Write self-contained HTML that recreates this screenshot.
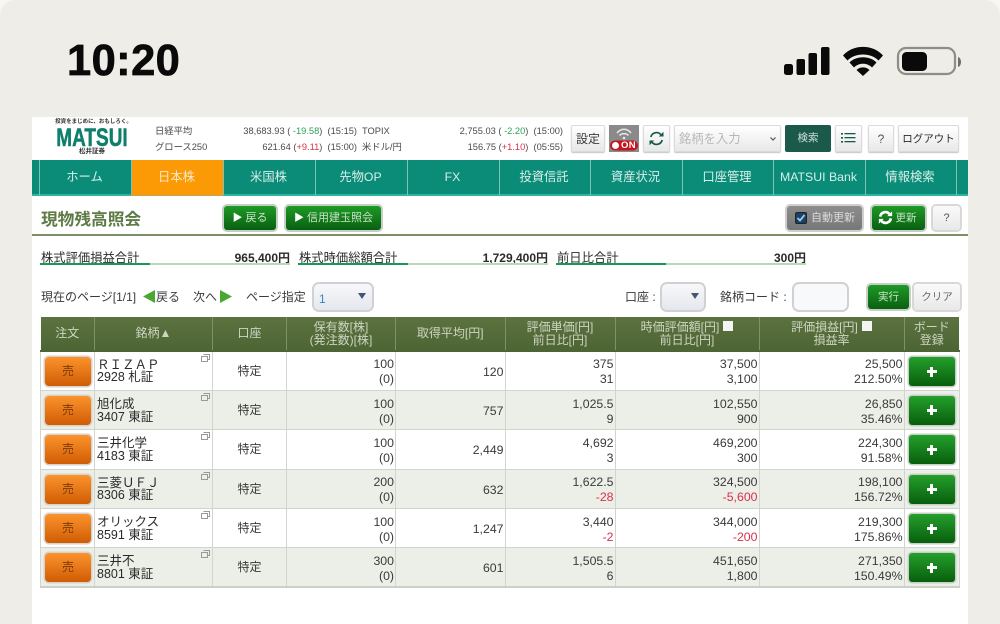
<!DOCTYPE html>
<html lang="ja"><head><meta charset="utf-8"><title>現物残高照会</title>
<style>
*{box-sizing:border-box}
html{margin:0;padding:0;width:1000px;height:624px;overflow:hidden;background:#f7f6f2}
body{margin:0;padding:0;width:1000px;height:624px;overflow:hidden;position:relative;background:#f7f6f2;font-family:"Liberation Sans","Noto Sans CJK JP",sans-serif;color:#3a3a3a;font-size:12px}
#w{position:absolute;left:0;top:0;width:1000px;height:624px;overflow:hidden;filter:blur(.25px)}
.bg{position:absolute;left:0;top:0;width:1000px;height:624px;background:#eeede7;border-radius:16px 16px 0 0}
.a{position:absolute;white-space:nowrap}
.page{position:absolute;left:32px;top:117px;width:936px;height:507px;background:#fff}
.time{left:67px;top:36px;font-size:43.500px;font-weight:bold;color:#0a0a0a;line-height:50px;letter-spacing:.4px;-webkit-text-stroke:.7px #0a0a0a}
.mk{font-size:9.300px;line-height:12px;color:#4a4a4a}
.r{text-align:right}
.g{color:#2aa05a}.red{color:#d8304a}
.btn{position:absolute;background:linear-gradient(#fff,#e8e8e8);border:1px solid #dadada;box-shadow:0 1px 1px #c4c4c4;border-radius:2px;text-align:center;color:#3a3a3a;white-space:nowrap}
.nav{position:absolute;left:32px;top:160px;width:936px;height:36px;background:#0a8c78;border-bottom:2px solid #2db59d}
.nav div{position:absolute;top:0;height:35px;width:92px;line-height:35px;text-align:center;color:#d8eeea;font-size:12.300px;border-left:1px solid #7cc4b6;white-space:nowrap;padding-right:2px}
.gb{position:absolute;border-radius:3px;background:linear-gradient(#1d9a26,#0a5f10);color:#c8e2ca;text-align:center;box-shadow:0 0 0 2px #c6cfc4;white-space:nowrap}
.sum{font-size:12.300px;color:#2a2a2a;line-height:14px}
.val{font-size:12px;font-weight:bold;color:#2a2a2a;line-height:14px;text-align:right;width:100px}
.bar{position:absolute;height:2px;background:#b9d8b8}
.bar i{position:absolute;left:0;top:0;height:2px;background:#169a55}
.sel{position:absolute;background:linear-gradient(#f7f8fa,#e4e7ec);border-radius:5px;box-shadow:0 0 0 2px #cfd1d3}
.arr{position:absolute;width:0;height:0;border-left:4px solid transparent;border-right:4px solid transparent;border-top:6px solid #44557a}
.lb{font-size:12px;line-height:16px;color:#3a3a3a}
table{position:absolute;left:40px;top:317px;width:919.500px;border-collapse:collapse;table-layout:fixed}
th{height:34px;background:linear-gradient(#5c7340,#4d6534);color:#cdd5c2;font-weight:normal;font-size:12px;line-height:12.500px;border-left:1px solid #7f9168;padding:0;text-align:center;border-bottom:2px solid #4d6534}
th:first-child{border-left:0}
td{height:39.400px;border:1px solid #d2d5ce;padding:3px 1px 0 0;font-size:12.300px;line-height:15px;color:#3a3a3a;text-align:right;position:relative;overflow:visible}
tr:nth-child(even) td{background:#eceee8}
tr:last-child td{border-bottom:2px solid #ccd0c8}
td.c{text-align:center;font-size:12px;padding:1px 0 0}
td.n{text-align:left;padding:1px 0 0 2px;line-height:12.500px;font-size:12.500px;color:#2a2a2a}
td.o{padding:0}
.sell{position:absolute;left:4px;top:5px;width:46px;height:29px;border-radius:4px;background:linear-gradient(#fb932c,#d05c04);box-shadow:0 0 0 1.500px #d6d2ca;color:#7c3a05;text-align:center;line-height:29px;font-size:12px}
.plus{position:absolute;left:4px;top:5px;width:46px;height:29px;border-radius:3px;background:linear-gradient(#259f2c,#075f0c);box-shadow:0 0 0 1.500px #c6cfc4}
.plus:before{content:"";position:absolute;left:18px;top:13px;width:10px;height:3px;background:#fff}
.plus:after{content:"";position:absolute;left:21.500px;top:9.500px;width:3px;height:10px;background:#fff}
.win{position:absolute;right:2px;top:2px;width:9px;height:8px}
.chk{display:inline-block;width:10px;height:10px;background:#f4f4f4;vertical-align:0;margin-left:4px}
</style></head><body>
<div id="w">
<div class="bg"></div>
<div class="a time">10:20</div>
<svg class="a" style="left:784px;top:46px" width="180" height="32" viewBox="0 0 180 32">
<rect x="0" y="18" width="9" height="11" rx="2.500" fill="#0a0a0a"/><rect x="12.500" y="13" width="8.500" height="16" rx="2" fill="#0a0a0a"/><rect x="24.500" y="7" width="8.500" height="22" rx="2" fill="#0a0a0a"/><rect x="37" y="1" width="8.500" height="28" rx="2" fill="#0a0a0a"/>
<path d="M59 9.500C69 -2 89 -2 99 9.500L94.500 14.500C87 6.500 71 6.500 63.500 14.500Z" fill="#0a0a0a"/><path d="M65.500 16.500C72 9.500 86 9.500 92.500 16.500L88 21.500C83.500 16.500 74.500 16.500 70 21.500Z" fill="#0a0a0a"/><path d="M72.500 24C76 20.500 82 20.500 85.500 24L79 30Z" fill="#0a0a0a"/>
<rect x="114" y="2" width="57" height="26" rx="8" fill="none" stroke="#8e8d88" stroke-width="2.200"/><rect x="118" y="6" width="25" height="19" rx="4.500" fill="#0a0a0a"/><path d="M174 11C178 12 178 20 174 21Z" fill="#6f6e68"/>
</svg>
<div class="page"></div>
<div class="a" style="left:50px;top:119px;width:87px;font-size:5.500px;line-height:7px;color:#333;font-weight:bold;text-align:center">投資をまじめに、おもしろく。</div>
<div class="a" style="left:42px;top:126px;width:100px;font-size:25px;line-height:25px;font-weight:bold;color:#0d7f6c;text-align:center;transform:scaleX(.76);-webkit-text-stroke:.5px #0d7f6c">MATSUI</div>
<div class="a" style="left:62px;top:148px;width:60px;font-size:6.500px;line-height:8px;color:#333;font-weight:bold;text-align:center">松井証券</div>
<div class="a mk" style="left:155px;top:125px">日経平均</div>
<div class="a mk" style="left:155px;top:141px">グロース250</div>
<div class="a mk r" style="left:200px;width:157px;top:125px">38,683.93 ( <span class="g">-19.58</span>)&nbsp; (15:15)</div>
<div class="a mk r" style="left:200px;width:157px;top:141px">621.64 (<span class="red">+9.11</span>)&nbsp; (15:00)</div>
<div class="a mk" style="left:362px;top:125px">TOPIX</div>
<div class="a mk" style="left:362px;top:141px">米ドル/円</div>
<div class="a mk r" style="left:420px;width:143px;top:125px">2,755.03 ( <span class="g">-2.20</span>)&nbsp; (15:00)</div>
<div class="a mk r" style="left:420px;width:143px;top:141px">156.75 (<span class="red">+1.10</span>)&nbsp; (05:55)</div>
<div class="btn" style="left:571px;top:125px;width:34px;height:27px;line-height:27px;font-size:12px">設定</div>
<div class="a" style="left:609px;top:125px;width:30px;height:27px;background:#8a8a8a"></div>
<svg class="a" style="left:609px;top:125px" width="30" height="27" viewBox="0 0 30 27"><path d="M8 8C12 3 18 3 22 8M10.500 10.500C13 8 17 8 19.500 10.500" fill="none" stroke="#e8e8e8" stroke-width="1.500"/><circle cx="15" cy="13" r="1.300" fill="#e8e8e8"/><rect x="1" y="15.500" width="28" height="10" rx="5" fill="#c4141c"/><circle cx="6.500" cy="20.500" r="3.500" fill="#fff"/></svg>
<div class="a" style="left:621px;top:140px;font-size:9.500px;line-height:11px;font-weight:bold;color:#fff;letter-spacing:.4px">ON</div>
<div class="btn" style="left:643px;top:125px;width:27px;height:27px"></div>
<svg class="a" style="left:648px;top:130px" width="17" height="17" viewBox="0 0 17 17"><path d="M2.800 7A5.800 5.800 0 0 1 12.800 4.600" fill="none" stroke="#17594a" stroke-width="1.700"/><path d="M10.800 6.500H15.500V1.800Z" fill="#17594a"/><path d="M14.200 10A5.800 5.800 0 0 1 4.200 12.400" fill="none" stroke="#17594a" stroke-width="1.700"/><path d="M6.200 10.500H1.500V15.200Z" fill="#17594a"/></svg>
<div class="btn" style="left:674px;top:125px;width:107px;height:27px;line-height:27px;text-align:left;padding-left:4px;color:#b8b8b8;font-size:12.300px">銘柄を入力</div>
<svg class="a" style="left:769px;top:136px" width="8" height="6" viewBox="0 0 8 6"><path d="M1.500 1.500L4 4L6.500 1.500" fill="none" stroke="#555" stroke-width="1.200"/></svg>
<div class="a" style="left:785px;top:125px;width:46px;height:27px;line-height:27px;background:#1b5a4b;color:#cfe0da;text-align:center;font-size:10.500px;border-radius:2px">検索</div>
<div class="btn" style="left:835px;top:125px;width:27px;height:27px"></div>
<svg class="a" style="left:841px;top:132px" width="15" height="12" viewBox="0 0 15 12"><g fill="#17594a"><rect x="0" y="1" width="2" height="1.600"/><rect x="3.500" y="1" width="11" height="1.300"/><rect x="0" y="5" width="2" height="1.600"/><rect x="3.500" y="5" width="11" height="1.300"/><rect x="0" y="9" width="2" height="1.600"/><rect x="3.500" y="9" width="11" height="1.300"/></g></svg>
<div class="btn" style="left:868px;top:125px;width:26px;height:27px;line-height:27px;font-size:12px;color:#555">?</div>
<div class="btn" style="left:898px;top:125px;width:61px;height:27px;line-height:27px;font-size:10.500px;color:#2a2a2a">ログアウト</div>

<div class="nav">
<div style="left:7px">ホーム</div>
<div style="left:99px;background:#fb9a05;color:#fbe8c8">日本株</div>
<div style="left:191px">米国株</div>
<div style="left:283px">先物OP</div>
<div style="left:375px">FX</div>
<div style="left:467px;width:91px">投資信託</div>
<div style="left:558px;width:92px">資産状況</div>
<div style="left:650px;width:91px">口座管理</div>
<div style="left:741px;width:92px">MATSUI Bank</div>
<div style="left:833px;width:91px">情報検索</div>
<div style="left:924px;width:12px"></div>
</div>
<div class="a" style="left:131px;top:194px;width:92px;height:2px;background:#e0a030"></div>

<div class="a" style="left:41px;top:209px;font-size:16.700px;line-height:22px;font-weight:bold;color:#5e7a45">現物残高照会</div>
<div class="a" style="left:32px;top:234px;width:936px;height:2px;background:#7e8f66"></div>
<div class="gb" style="left:224px;top:206px;width:52px;height:24px;line-height:24px;font-size:11px"><span style="color:#fff;font-size:10px">▶</span> 戻る</div>
<div class="gb" style="left:286px;top:206px;width:95px;height:24px;line-height:24px;font-size:11px"><span style="color:#fff;font-size:10px">▶</span> 信用建玉照会</div>
<div class="a" style="left:787px;top:206px;width:75px;height:24px;border-radius:3px;background:linear-gradient(#8d8d8d,#777);box-shadow:0 0 0 2px #cfcfcf;color:#ddd;font-size:11px;line-height:24px;padding-left:24px">自動更新</div>
<div class="a" style="left:795px;top:212px;width:12px;height:12px;background:#1c3f66;border:1px solid #222;border-radius:2px"></div>
<svg class="a" style="left:796px;top:213px" width="10" height="10" viewBox="0 0 10 10"><path d="M1.500 5L4 7.500L8.500 2" fill="none" stroke="#8fd0e8" stroke-width="1.800"/></svg>
<div class="gb" style="left:872px;top:206px;width:53px;height:24px;line-height:24px;font-size:10.500px;padding-left:15px">更新</div>
<svg class="a" style="left:878px;top:210px" width="15" height="15" viewBox="0 0 17 17"><path d="M2.500 7.500A6 6 0 0 1 13 4.500" fill="none" stroke="#fff" stroke-width="3"/><path d="M10.500 7H16V1.500Z" fill="#fff"/><path d="M14.500 9.500A6 6 0 0 1 4 12.500" fill="none" stroke="#fff" stroke-width="3"/><path d="M6.500 10H1V15.500Z" fill="#fff"/></svg>
<div class="a" style="left:933px;top:206px;width:27px;height:24px;line-height:24px;text-align:center;background:linear-gradient(#fafafa,#e8e8e8);box-shadow:0 0 0 2px #d8d8d8;border-radius:3px;font-size:11px;color:#555">?</div>

<div class="a sum" style="left:41px;top:251px">株式評価損益合計</div>
<div class="a val" style="left:190px;top:251px">965,400円</div>
<div class="bar" style="left:40px;top:263px;width:250px"><i style="width:110px"></i></div>
<div class="a sum" style="left:299px;top:251px">株式時価総額合計</div>
<div class="a val" style="left:448px;top:251px">1,729,400円</div>
<div class="bar" style="left:298px;top:263px;width:250px"><i style="width:110px"></i></div>
<div class="a sum" style="left:557px;top:251px">前日比合計</div>
<div class="a val" style="left:706px;top:251px">300円</div>
<div class="bar" style="left:556px;top:263px;width:250px"><i style="width:110px"></i></div>

<div class="a lb" style="left:41px;top:289px">現在のページ[1/1]</div>
<svg class="a" style="left:143px;top:290px" width="12" height="13" viewBox="0 0 12 13"><path d="M12 0V13L0 6.500Z" fill="#48a832"/></svg>
<div class="a lb" style="left:156px;top:289px">戻る</div>
<div class="a lb" style="left:193px;top:289px">次へ</div>
<svg class="a" style="left:220px;top:290px" width="12" height="13" viewBox="0 0 12 13"><path d="M0 0V13L12 6.500Z" fill="#48a832"/></svg>
<div class="a lb" style="left:246px;top:289px">ページ指定</div>
<div class="sel" style="left:314px;top:284px;width:58px;height:26px"></div>
<div class="a" style="left:319px;top:291px;font-size:12px;line-height:16px;color:#3f84c0">1</div>
<div class="arr" style="left:358px;top:293px"></div>
<div class="a lb" style="left:625px;top:289px">口座 :</div>
<div class="sel" style="left:662px;top:284px;width:42px;height:26px"></div>
<div class="arr" style="left:691px;top:293px"></div>
<div class="a lb" style="left:720px;top:289px">銘柄コード&nbsp;:</div>
<div class="sel" style="left:794px;top:284px;width:53px;height:26px;background:#f8f9fa"></div>
<div class="gb" style="left:868px;top:285px;width:41px;height:24px;line-height:25px;font-size:10.500px">実行</div>
<div class="a" style="left:914px;top:284px;width:46px;height:26px;line-height:27px;text-align:center;background:linear-gradient(#fafafa,#e8e8e8);box-shadow:0 0 0 2px #d8d8d8;border-radius:3px;font-size:10.500px;color:#666">クリア</div>

<table>
<colgroup><col style="width:54px"><col style="width:118px"><col style="width:74px"><col style="width:109px"><col style="width:109.500px"><col style="width:110px"><col style="width:144px"><col style="width:145px"><col style="width:55px"></colgroup>
<thead><tr>
<th>注文</th><th>銘柄▲</th><th>口座</th><th>保有数[株]<br>(発注数)[株]</th><th>取得平均[円]</th><th>評価単価[円]<br>前日比[円]</th><th>時価評価額[円]<span class="chk"></span><br>前日比[円]</th><th>評価損益[円]<span class="chk"></span><br>損益率</th><th>ボード<br>登録</th>
</tr></thead>
<tbody>
<tr><td class="o"><div class="sell">売</div></td><td class="n">ＲＩＺＡＰ<br>2928 札証<svg class="win" viewBox="0 0 9 8"><path d="M2.500 .500H8.500V5.500H7M.500 2.500H6.500V7.500H.500Z" fill="none" stroke="#999"/></svg></td><td class="c">特定</td><td>100<br>(0)</td><td>120</td><td>375<br>31</td><td>37,500<br>3,100</td><td>25,500<br>212.50%</td><td class="o"><div class="plus"></div></td></tr>
<tr><td class="o"><div class="sell">売</div></td><td class="n">旭化成<br>3407 東証<svg class="win" viewBox="0 0 9 8"><path d="M2.500 .500H8.500V5.500H7M.500 2.500H6.500V7.500H.500Z" fill="none" stroke="#999"/></svg></td><td class="c">特定</td><td>100<br>(0)</td><td>757</td><td>1,025.5<br>9</td><td>102,550<br>900</td><td>26,850<br>35.46%</td><td class="o"><div class="plus"></div></td></tr>
<tr><td class="o"><div class="sell">売</div></td><td class="n">三井化学<br>4183 東証<svg class="win" viewBox="0 0 9 8"><path d="M2.500 .500H8.500V5.500H7M.500 2.500H6.500V7.500H.500Z" fill="none" stroke="#999"/></svg></td><td class="c">特定</td><td>100<br>(0)</td><td>2,449</td><td>4,692<br>3</td><td>469,200<br>300</td><td>224,300<br>91.58%</td><td class="o"><div class="plus"></div></td></tr>
<tr><td class="o"><div class="sell">売</div></td><td class="n">三菱ＵＦＪ<br>8306 東証<svg class="win" viewBox="0 0 9 8"><path d="M2.500 .500H8.500V5.500H7M.500 2.500H6.500V7.500H.500Z" fill="none" stroke="#999"/></svg></td><td class="c">特定</td><td>200<br>(0)</td><td>632</td><td>1,622.5<br><span class="red">-28</span></td><td>324,500<br><span class="red">-5,600</span></td><td>198,100<br>156.72%</td><td class="o"><div class="plus"></div></td></tr>
<tr><td class="o"><div class="sell">売</div></td><td class="n">オリックス<br>8591 東証<svg class="win" viewBox="0 0 9 8"><path d="M2.500 .500H8.500V5.500H7M.500 2.500H6.500V7.500H.500Z" fill="none" stroke="#999"/></svg></td><td class="c">特定</td><td>100<br>(0)</td><td>1,247</td><td>3,440<br><span class="red">-2</span></td><td>344,000<br><span class="red">-200</span></td><td>219,300<br>175.86%</td><td class="o"><div class="plus"></div></td></tr>
<tr><td class="o"><div class="sell">売</div></td><td class="n">三井不<br>8801 東証<svg class="win" viewBox="0 0 9 8"><path d="M2.500 .500H8.500V5.500H7M.500 2.500H6.500V7.500H.500Z" fill="none" stroke="#999"/></svg></td><td class="c">特定</td><td>300<br>(0)</td><td>601</td><td>1,505.5<br>6</td><td>451,650<br>1,800</td><td>271,350<br>150.49%</td><td class="o"><div class="plus"></div></td></tr>
</tbody>
</table>
</div>
</body></html>
